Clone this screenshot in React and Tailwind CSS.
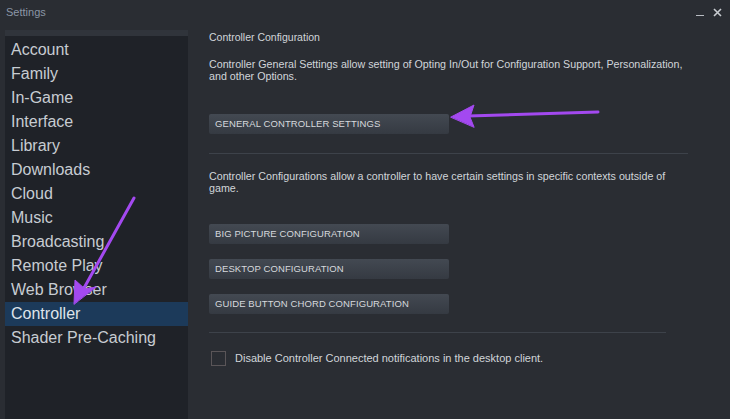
import React from 'react';

const navItems = [
    'Account', 'Family', 'In-Game', 'Interface', 'Library', 'Downloads', 'Cloud', 'Music',
    'Broadcasting', 'Remote Play', 'Web Browser', 'Controller', 'Shader Pre-Caching'
];

const SteamButton = ({ children }) => (
    <button className="w-[240px] h-[20px] pl-[6px] text-left text-[9.5px] tracking-[0.1px] text-[#d6d9dd] bg-gradient-to-b from-[#434952] to-[#353a42] rounded-[2px]">
        {children}
    </button>
);

const App = () => {
    return (
        <div className="relative w-[730px] h-[419px] overflow-hidden bg-[#2a2d33] font-['Liberation_Sans',Arial,sans-serif]">
            {/* Title bar */}
            <div className="flex items-center justify-between h-[30px] px-[6px] pb-[6px]">
                <span className="text-[11px] text-[#8b96a6]">Settings</span>
                <div className="flex items-center gap-[9px] pr-[2px]">
                    <div className="w-[8px] h-[1.5px] bg-[#b8bcc2] mt-[7px]" />
                    <svg width="9" height="9" viewBox="0 0 9 9" className="text-[#c8ccd1]">
                        <path d="M1 1 L8 8 M8 1 L1 8" stroke="currentColor" strokeWidth="1.6" />
                    </svg>
                </div>
            </div>

            <div className="flex h-[389px]">
                {/* Sidebar */}
                <nav className="ml-[5px] w-[183px] bg-[#1f2228]">
                    <div className="h-[6px] bg-[#30343b]" />
                    <ul className="pt-[2px]">
                        {navItems.map((label) => (
                            <li
                                key={label}
                                className={`h-[24px] flex items-center pl-[6px] text-[16px] text-[#c7ccd2] ${label === 'Controller' ? 'bg-[#1c3a5a] text-[#dfe4ea]' : ''}`}
                            >
                                {label}
                            </li>
                        ))}
                    </ul>
                </nav>

                {/* Content */}
                <main className="flex-1 pl-[21px] pr-[20px] text-[10.7px] text-[#d1d5da]">
                    <h2 className="mt-[1px] leading-[13px] text-[10.5px]">Controller Configuration</h2>
                    <p className="mt-[14px] leading-[12px] max-w-[480px]">
                        Controller General Settings allow setting of Opting In/Out for Configuration Support, Personalization, and other Options.
                    </p>
                    <div className="mt-[32px]">
                        <SteamButton>GENERAL CONTROLLER SETTINGS</SteamButton>
                    </div>
                    <div className="mt-[19px] mr-[22px] h-px bg-[#3d424a]" />
                    <p className="mt-[16px] leading-[12px] max-w-[475px]">
                        Controller Configurations allow a controller to have certain settings in specific contexts outside of game.
                    </p>
                    <div className="mt-[30px] flex flex-col gap-[15px]">
                        <SteamButton>BIG PICTURE CONFIGURATION</SteamButton>
                        <SteamButton>DESKTOP CONFIGURATION</SteamButton>
                        <SteamButton>GUIDE BUTTON CHORD CONFIGURATION</SteamButton>
                    </div>
                    <div className="mt-[18px] mr-[44px] h-px bg-[#3d424a]" />
                    <label className="mt-[17px] flex items-center gap-[9px] pl-[2px] text-[11px]">
                        <span className="w-[15px] h-[15px] border border-[#5a5558] bg-[#2a2d33]" />
                        <span>Disable Controller Connected notifications in the desktop client.</span>
                    </label>
                </main>
            </div>

            {/* Annotation arrows */}
            <svg className="absolute inset-0 pointer-events-none" width="730" height="419" viewBox="0 0 730 419">
                <g fill="#a349f0" stroke="#a349f0" strokeLinecap="round">
                    <path d="M598 112 L468 116" strokeWidth="3" fill="none" />
                    <path d="M451 117 L474 105 L470 117 L474 127 Z" strokeWidth="1" />
                    <path d="M134 198 L84 288" strokeWidth="3" fill="none" />
                    <path d="M74 304 L75 280 L85 289 L96 287 Z" strokeWidth="1" />
                </g>
            </svg>
        </div>
    );
};

export default App;
